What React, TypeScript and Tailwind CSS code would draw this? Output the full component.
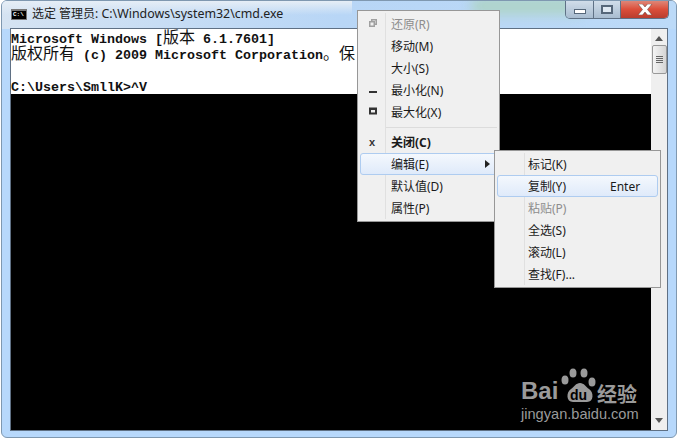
const cjk = '"Noto Sans","Noto Sans CJK SC",sans-serif';
const sans = '"Liberation Sans",sans-serif';

function Row({ text, disabled, bold, icon, hot, right, arrow }: { text: string; disabled?: boolean; bold?: boolean; icon?: React.ReactNode; hot?: boolean; right?: string; arrow?: boolean }) {
  return (
    <div className={`relative flex h-[22px] items-center rounded-[3px] border ${hot ? 'border-[#aeccf0] bg-gradient-to-b from-[#f4f8fd] to-[#dfeafa]' : 'border-transparent'}`}>
      <div className="flex h-full w-[30px] shrink-0 items-center pl-[7px]">{icon}</div>
      <span className={`pt-[2px] text-[12px] leading-none ${disabled ? 'text-[#8d8d8d]' : 'text-[#1a1a1a]'} ${bold ? 'font-bold' : ''}`}>{text}</span>
      {right && <span className="absolute left-[112px] pt-[1px] text-[12px] text-[#1a1a1a]">{right}</span>}
      {arrow && <svg className="absolute left-[124px]" width="5" height="8" viewBox="0 0 5 8"><path d="M0 0L5 4L0 8Z" fill="#222" /></svg>}
    </div>
  );
}

const IconBox = ({ c }: { c: React.ReactNode }) => <svg width="12" height="12" viewBox="0 0 12 12">{c}</svg>;

function Cn({ children }: { children: React.ReactNode }) {
  return <span className="text-[16px] leading-[0] font-normal" style={{ fontFamily: '"Noto Sans CJK SC",sans-serif' }}>{children}</span>;
}

export default function App() {
  return (
    <div className="relative h-[438px] w-[678px] overflow-hidden bg-white" style={{ fontFamily: cjk }}>
      <div className="absolute inset-x-[1px] top-0 bottom-0 flex flex-col overflow-hidden rounded-[6px] border border-[#7f98b0] bg-[#b7d8fb]">
        <div className="pointer-events-none absolute left-0 top-0 h-[28px] w-full bg-gradient-to-r from-[#d5e3f2] via-[#b8d6f6] to-[#bcdaf8]" />
        <div className="pointer-events-none absolute left-0 top-0 h-[14px] w-[350px] bg-gradient-to-b from-[#e6eef6] to-transparent" />
        <div className="pointer-events-none absolute left-[470px] top-[-4px] h-[18px] w-[110px] bg-[#aed3c9] blur-[6px]" />
        <div className="relative flex h-[27px] shrink-0 items-center pb-[1px] pl-[9px]">
          <div className="flex h-[11px] w-[16px] items-center border border-t-2 border-[#777] bg-black pl-[1px]">
            <span className="text-[6px] leading-none font-bold text-white" style={{ fontFamily: '"Liberation Mono",monospace' }}>C:\</span>
          </div>
          <span className="ml-[5px] whitespace-nowrap text-[12px] text-[#222]">选定 管理员: <span className="text-[12.4px]">C:\Windows\system32\cmd.exe</span></span>
        </div>
        <div className="absolute right-[7px] top-[-1px] flex h-[19px] overflow-hidden rounded-b-[5px] border border-t-0 border-[#5f7186]">
          <div className="flex w-[28px] items-center justify-center border-r border-[#5f7186] bg-gradient-to-b from-[#d3dfeb] to-[#a8bcd0]">
            <div className="mt-[5px] h-[5px] w-[12px] border border-[#56677a] bg-white" />
          </div>
          <div className="flex w-[27px] items-center justify-center border-r border-[#5f7186] bg-gradient-to-b from-[#d3dfeb] to-[#a8bcd0]">
            <div className="h-[9px] w-[12px] border-2 border-[#56677a] bg-[#dfe9f3]" />
          </div>
          <div className="flex w-[47px] items-center justify-center bg-gradient-to-b from-[#dc8c7f] via-[#dc4f3b] to-[#b93d2f]">
            <svg width="16" height="11" viewBox="0 0 16 11"><path d="M1 0H5.5L8 3L10.500 0H15L10.500 5.500L15 11H10.500L8 8L5.500 11H1L5.500 5.500Z" fill="#fff" stroke="#5a3a36" strokeWidth="0.5" /></svg>
          </div>
        </div>
        <div className="relative mx-[8px] mb-[6px] flex flex-1 border border-[#5f7084] bg-white">
          <div className="flex w-[640px] shrink-0 flex-col">
            <div className="h-[65px] shrink-0 pt-[3px] text-[13.33px] leading-[16px] font-bold whitespace-pre text-[#111]" style={{ fontFamily: '"Liberation Mono",monospace' }}>
              <div className="h-[16px]">Microsoft Windows [<Cn>版本</Cn> 6.1.7601]</div>
              <div className="h-[16px]"><Cn>版权所有</Cn> (c) 2009 Microsoft Corporation<Cn>。保</Cn></div>
              <div className="h-[16px]" />
              <div className="h-[16px]">C:\Users\SmllK&gt;^V</div>
            </div>
            <div className="relative flex-1 bg-black">
              <span className="absolute left-[510px] top-[285px] text-[24px] leading-none font-bold text-[#9a9a9a]" style={{ fontFamily: sans }}>Bai</span>
              <svg className="absolute left-[549px] top-[274px]" width="40" height="40" viewBox="0 0 40 40" fill="#9a9a9a">
                <ellipse cx="5" cy="12" rx="3.500" ry="4.500" />
                <ellipse cx="13" cy="5" rx="3.500" ry="4.500" />
                <ellipse cx="24" cy="5" rx="3.500" ry="4.500" />
                <ellipse cx="32" cy="14" rx="3.500" ry="4.500" />
                <path d="M20 15C24 15 26 19 29 21C34 24 34 34 27 34H13C6 34 6 24 11 21C14 19 16 15 20 15Z" />
              </svg>
              <span className="absolute left-[559px] top-[294px] text-[14px] leading-none font-bold text-black" style={{ fontFamily: sans }}>du</span>
              <span className="absolute left-[586px] top-[291px] text-[20px] leading-none font-bold whitespace-nowrap text-[#9a9a9a]">经验</span>
              <span className="absolute left-[510px] top-[313px] text-[14.6px] leading-none whitespace-nowrap text-[#9a9a9a]" style={{ fontFamily: sans }}>jingyan.baidu.com</span>
            </div>
          </div>
          <div className="relative flex flex-1 flex-col items-center bg-[#efefef]">
            <svg className="mt-[7px]" width="8" height="5" viewBox="0 0 8 5"><path d="M4 0L8 5H0Z" fill="#555" /></svg>
            <div className="mt-[4px] flex h-[29px] w-[15px] flex-col items-center justify-center gap-[1px] rounded-[2px] border border-[#999] bg-gradient-to-r from-[#f4f4f4] to-[#d5d5d5]">
              <div className="h-[1px] w-[7px] bg-[#666]" />
              <div className="h-[1px] w-[7px] bg-[#666]" />
              <div className="h-[1px] w-[7px] bg-[#666]" />
              <div className="h-[1px] w-[7px] bg-[#666]" />
            </div>
            <svg className="absolute bottom-[7px]" width="8" height="5" viewBox="0 0 8 5"><path d="M4 5L8 0H0Z" fill="#555" /></svg>
          </div>
        </div>
      </div>

      <div className="absolute left-[357px] top-[10px] h-[212px] w-[143px] border border-[#979797] bg-[#f0f0f0] p-[2px]">
        <div className="absolute bottom-[2px] left-[27px] top-[2px] w-[1px] bg-[#e0e0e0]" />
        <Row disabled text="还原(R)" icon={<IconBox c={<path d="M3 1H9V7H7V9H1V3H3Z M4.500 2.500V3H7V5.500H7.500V2.500Z M2.500 4.500V7.500H5.500V4.500Z" fillRule="evenodd" fill="#a0a0a0" />} />} />
        <Row text="移动(M)" />
        <Row text="大小(S)" />
        <Row text="最小化(N)" icon={<IconBox c={<rect x="1" y="7" width="8" height="2" fill="#333" />} />} />
        <Row text="最大化(X)" icon={<IconBox c={<path d="M1 1.500H9V8.500H1Z M3 4V6.500H7V4Z" fillRule="evenodd" fill="#333" />} />} />
        <div className="ml-[26px] mt-[4px] mb-[3px] h-[1px] bg-[#dcdcdc]" />
        <Row bold text="关闭(C)" icon={<span className="pl-[1px] text-[11px] font-bold text-[#333]" style={{ fontFamily: sans }}>x</span>} />
        <Row hot arrow text="编辑(E)" />
        <Row text="默认值(D)" />
        <Row text="属性(P)" />
      </div>

      <div className="absolute left-[494px] top-[150px] w-[167px] border border-[#979797] bg-[#f0f0f0] p-[2px]">
        <div className="absolute bottom-[2px] left-[29px] top-[2px] w-[1px] bg-[#e0e0e0]" />
        <Row text="标记(K)" />
        <Row hot text="复制(Y)" right="Enter" />
        <Row disabled text="粘贴(P)" />
        <Row text="全选(S)" />
        <Row text="滚动(L)" />
        <Row text="查找(F)..." />
      </div>
    </div>
  );
}
